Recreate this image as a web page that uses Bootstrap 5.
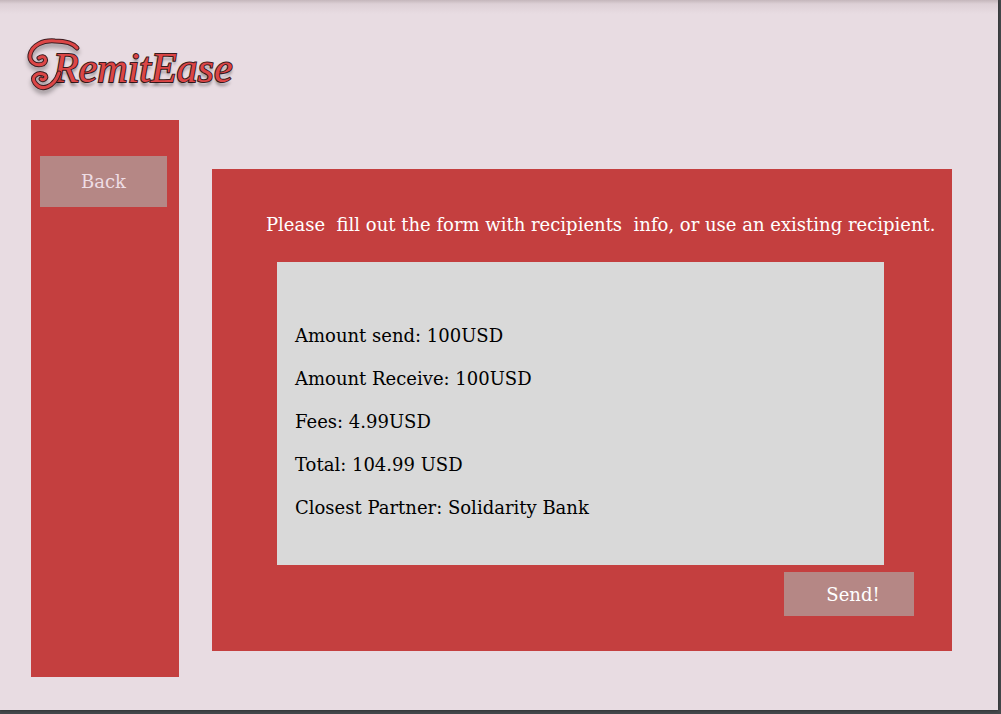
<!DOCTYPE html>
<html lang="en">
<head>
<meta charset="utf-8">
<meta name="viewport" content="width=device-width, initial-scale=1">
<title>RemitEase</title>
<link href="https://cdn.jsdelivr.net/npm/bootstrap@5.3.0/dist/css/bootstrap.min.css" rel="stylesheet">
<style>
  body { background: #45494c; font-family: "DejaVu Serif", serif; font-size: 18px; }
  .page { background: #e8dce2 linear-gradient(#c4b6bb, #ddd0d6 4px, #e8dce2 14px) no-repeat 0 0 / 100% 14px; margin: 0 3px 4px 0; min-height: calc(100vh - 4px); padding: 0 46px 33px 31px; box-shadow: 0 0 3px #222; }
  .masthead { height: 120px; padding-top: 36px; }
  .brand { position: relative; color: #dc4646; font: italic 42px/64px "Liberation Serif", serif; padding-left: 22px; -webkit-text-stroke: 2px #3b1c20; paint-order: stroke fill; text-shadow: 0 4px 3px rgba(0,0,0,.35); }
  .brand:hover { color: #dc4646; }
  .swash { position: absolute; left: -4px; top: 1px; overflow: visible; filter: drop-shadow(0 4px 2px rgba(0,0,0,.3)); }
  .side { width: 148px; padding: 36px 12px 36px 9px; background: #c43f3f; }
  .main { margin: 49px 0 26px 33px; padding: 41px 0 35px; background: #c43f3f; }
  .lead-in { color: #fff; line-height: 30px; margin: 0 0 22px 54px; white-space: pre-wrap; }
  .summary { background: #d9d9d9; color: #000; margin: 0 68px 7px 65px; padding: 52px 18px 36px; line-height: 43px; }
  .action { --bs-btn-bg: #b58785; --bs-btn-hover-bg: #a97977; --bs-btn-color: #fff; --bs-btn-hover-color: #fff; --bs-btn-font-family: inherit; --bs-btn-font-size: 18px; --bs-btn-border-width: 0; }
  .back { --bs-btn-color: #eedde4; height: 51px; }
  .send { width: 130px; height: 44px; margin-right: 38px; padding-left: 20px; }
</style>
</head>
<body>
<div class="page d-flex flex-column">
  <header class="masthead">
    <a class="brand d-inline-block text-decoration-none" href="#">
      <svg class="swash" width="60" height="56" viewBox="0 0 60 56" fill="none" stroke-linecap="round" aria-hidden="true">
        <path stroke="#3b1c20" stroke-width="5" d="M12 21C18 17 21 24 16 27C8 30 2 24 3 18C5 8 16 3 28 4C38 4 46 6 50 11M32 36C27 50 15 55 8 46C3 40 11 34 18 38C21 41 16 44 14 42"/>
        <path stroke="#dc4646" stroke-width="3" d="M12 21C18 17 21 24 16 27C8 30 2 24 3 18C5 8 16 3 28 4C38 4 46 6 50 11M32 36C27 50 15 55 8 46C3 40 11 34 18 38C21 41 16 44 14 42"/>
      </svg>RemitEase</a>
  </header>
  <div class="d-flex flex-grow-1">
    <nav class="side flex-shrink-0" aria-label="Page">
      <button type="button" class="btn action back rounded-0 w-100">Back</button>
    </nav>
    <main class="main flex-grow-1 d-flex flex-column">
      <p class="lead-in">Please  fill out the form with recipients  info, or use an existing recipient.</p>
      <ul class="summary list-unstyled">
        <li>Amount send: 100USD</li>
        <li>Amount Receive: 100USD</li>
        <li>Fees: 4.99USD</li>
        <li>Total: 104.99 USD</li>
        <li>Closest Partner: Solidarity Bank</li>
      </ul>
      <button type="button" class="btn action send rounded-0 align-self-end">Send!</button>
    </main>
  </div>
</div>
<script src="https://cdn.jsdelivr.net/npm/bootstrap@5.3.0/dist/js/bootstrap.bundle.min.js"></script>
</body>
</html>
